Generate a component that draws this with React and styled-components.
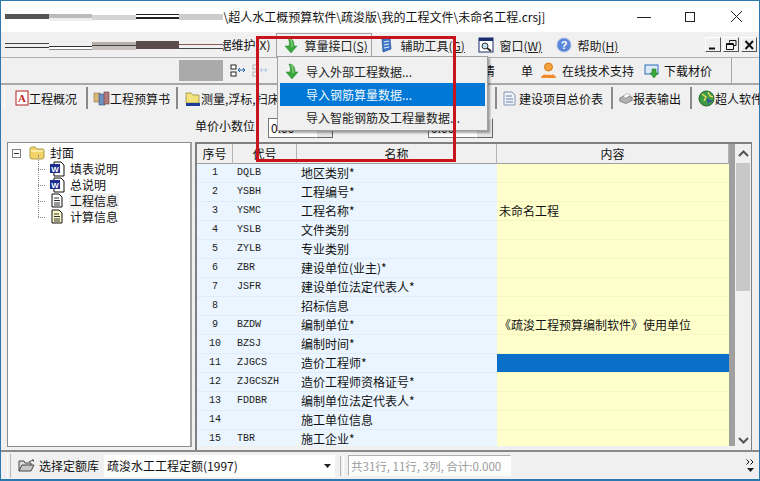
import styled, { createGlobalStyle } from 'styled-components';

const FONT = '"Noto Sans CJK SC", "Liberation Sans", sans-serif';

const rows = [
  [1, 'DQLB', '地区类别*', ''],
  [2, 'YSBH', '工程编号*', ''],
  [3, 'YSMC', '工程名称*', '未命名工程'],
  [4, 'YSLB', '文件类别', ''],
  [5, 'ZYLB', '专业类别', ''],
  [6, 'ZBR', '建设单位(业主)*', ''],
  [7, 'JSFR', '建设单位法定代表人*', ''],
  [8, '', '招标信息', ''],
  [9, 'BZDW', '编制单位*', '《疏浚工程预算编制软件》使用单位'],
  [10, 'BZSJ', '编制时间*', ''],
  [11, 'ZJGCS', '造价工程师*', ''],
  [12, 'ZJGCSZH', '造价工程师资格证号*', ''],
  [13, 'FDDBR', '编制单位法定代表人*', ''],
  [14, '', '施工单位信息', ''],
  [15, 'TBR', '施工企业*', ''],
];

const titleSmudges = [
  'linear-gradient(#fff 0 2px, #555 2px 7px, #fff 7px)',
  'linear-gradient(#fff 0 2px, #bbb 2px 6px, #eee 6px 9px, #fff 9px)',
  'linear-gradient(#fff 0 3px, #d4d4d4 3px 8px, #fff 8px)',
  'linear-gradient(#fff 0 2px, #222 2px 3px, #fff 3px 5px, #222 5px 7px, #fff 7px)',
  'linear-gradient(#fff 0 2px, #ccc 2px 8px, #fff 8px)',
];

const menuSmudges = [
  'linear-gradient(#f0f0f0 0 5px, #444 5px 6px, #f0f0f0 6px 9px, #333 9px 10px, #f0f0f0 10px)',
  'linear-gradient(#f0f0f0 0 8px, #333 8px 9px, #fff 9px 11px, #888 11px 12px, #f0f0f0 12px)',
  'linear-gradient(#f0f0f0 0 4px, #b8aeaa 4px 7px, #444 7px 8px, #c8c0bc 8px 12px, #f0f0f0 12px)',
  'linear-gradient(#f0f0f0 0 3px, #5a4c4a 3px 11px, #f0f0f0 11px)',
  'linear-gradient(#f0f0f0 0 6px, #8a5a55 6px 7px, #f0f0f0 7px 10px, #444 10px 11px, #f0f0f0 11px)',
];

const GlobalStyle = createGlobalStyle`
  html, body { margin: 0; padding: 0; background: #f0f0f0; }
  body { font-family: ${FONT}; font-size: 12px; color: #111; }
`;

const Win = styled.div`
  position: relative;
  width: 760px;
  height: 481px;
  overflow: hidden;
  box-sizing: border-box;
  border-left: 1px solid #2a7ab0;
  border-right: 1px solid #2a7ab0;
  border-top: 1px solid #2a7ab0;
  border-bottom: 2px solid #2a7ab0;
  display: flex;
  flex-direction: column;
  background: #f0f0f0;
`;

const TitleBar = styled.div`
  height: 31px;
  flex: none;
  background: #fff;
  display: flex;
  align-items: center;
  padding-left: 4px;
`;

const Smudge = styled.div`
  width: 43.5px;
  height: ${(p) => p.$h}px;
  background: ${(p) => p.$bg};
  flex: none;
`;

const TitleText = styled.div`
  margin-left: 1px;
  font-size: 12px;
  white-space: nowrap;
  flex: 1;
`;

const WinButton = styled.div`
  width: 46px;
  display: flex;
  justify-content: center;
  align-items: center;
  flex: none;
`;

const MenuBar = styled.div`
  height: 25px;
  flex: none;
  display: flex;
  align-items: center;
  padding-left: 4px;
  white-space: nowrap;
`;

const MenuClip = styled.span`
  width: 53px;
  overflow: hidden;
  flex: none;
  text-indent: -3px;
`;

const MenuItem = styled.div`
  height: 24px;
  width: ${(p) => p.$w}px;
  flex: none;
  box-sizing: border-box;
  display: flex;
  align-items: center;
  gap: ${(p) => p.$gap || 6}px;
  padding-left: ${(p) => p.$pad}px;
  border: 1px solid ${(p) => (p.$open ? '#a0a0a0' : 'transparent')};
  border-bottom: none;
  color: #222;
  svg { flex: none; }
`;

const Underlined = styled.span`
  text-decoration: underline;
  text-underline-offset: 1px;
`;

const MdiGroup = styled.div`
  display: flex;
  gap: 2px;
  margin-left: auto;
  margin-right: 2px;
`;

const MdiButton = styled.div`
  width: 16px;
  height: 15px;
  border: 1px solid;
  border-color: #fff #555 #555 #fff;
  box-sizing: border-box;
  display: flex;
  align-items: center;
  justify-content: center;
`;

const ToolBar = styled.div`
  height: 28px;
  flex: none;
  box-sizing: border-box;
  border-top: 1px solid #b0b0b0;
  border-bottom: 2px solid #a8a8a8;
  display: flex;
  align-items: center;
  padding-left: 178px;
  white-space: nowrap;
`;

const GrayBlock = styled.div`
  width: 44px;
  height: 21px;
  background: #aaa;
  flex: none;
  margin-right: 7px;
`;

const ToolIcon = styled.div`
  width: ${(p) => p.$w || 17}px;
  flex: none;
  display: flex;
  align-items: center;
`;

const ListLabel = styled.div`
  margin-left: 214px;
  width: 50px;
  flex: none;
  display: flex;
  justify-content: space-between;
`;

const ToolAction = styled.div`
  display: flex;
  align-items: center;
  gap: ${(p) => p.$gap}px;
  margin-left: ${(p) => p.$ml}px;
  flex: none;
`;

const ToolEnd = styled.div`
  width: 1px;
  height: 25px;
  background: #a8a8a8;
  margin-left: 19px;
  flex: none;
`;

const TabBar = styled.div`
  height: 26px;
  flex: none;
  display: flex;
  align-items: flex-start;
  padding: 2px 0 0 3px;
  box-sizing: border-box;
  white-space: nowrap;
  overflow: hidden;
`;

const TabItem = styled.div`
  height: 22px;
  flex: none;
  width: ${(p) => p.$w}px;
  box-sizing: border-box;
  display: flex;
  align-items: center;
  padding-left: ${(p) => p.$pad}px;
  gap: ${(p) => p.$gap || 0}px;
  border-left: ${(p) => (p.$first ? '1px solid #fff' : 'none')};
  border-right: 2px solid ${(p) => (p.$last ? 'transparent' : '#8a8a8a')};
  font-size: 12px;
  svg { flex: none; }
`;

const Options = styled.div`
  height: 31px;
  flex: none;
  box-sizing: border-box;
  display: flex;
  align-items: center;
  padding: 2px 0 0 194px;
`;

const OptLabel = styled.div`
  width: 73px;
  flex: none;
  padding-bottom: 5px;
`;

const Spin = styled.div`
  width: 65px;
  height: 20px;
  flex: none;
  display: flex;
  margin-left: ${(p) => p.$ml || 0}px;
`;

const SpinField = styled.div`
  flex: 1;
  background: #fff;
  border: 1px solid #777;
  border-right: none;
  font-size: 12px;
  line-height: 18px;
  padding-left: 2px;
`;

const SpinButton = styled.div`
  width: 17px;
  box-sizing: border-box;
  border: 1px solid;
  border-color: #fff #666 #666 #fff;
  background: #e6e6e6;
`;

const Body = styled.div`
  height: 310px;
  flex: none;
  display: flex;
  padding-left: 6px;
  padding-right: 6px;
  gap: 3px;
  box-sizing: border-box;
  border-bottom: 2px solid #8a8a8a;
`;

const TreePanel = styled.div`
  width: 185px;
  height: 305px;
  flex: none;
  box-sizing: border-box;
  background: #fff;
  border: 1px solid #8c8c8c;
  border-right: 2px solid #a0a0a0;
  padding: 2px 0 0 4px;
`;

const TreeRow = styled.div`
  height: 16px;
  display: flex;
  align-items: center;
  gap: ${(p) => p.$gap || 4}px;
  font-size: 12px;
  line-height: 16px;
`;

const Expander = styled.div`
  width: 9px;
  height: 9px;
  box-sizing: border-box;
  border: 1px solid #808080;
  position: relative;
  flex: none;
  margin-right: 3px;
  &::after {
    content: '';
    position: absolute;
    left: 1px;
    top: 3px;
    width: 5px;
    height: 1px;
    background: #333;
  }
`;

const TreeChildren = styled.div`
  margin-left: 26px;
  position: relative;
  &::before {
    content: '';
    position: absolute;
    left: 0;
    top: -6px;
    bottom: 8px;
    border-left: 1px dotted #888;
  }
`;

const Connector = styled.div`
  width: 7px;
  border-top: 1px dotted #888;
  flex: none;
`;

const TreeLabel = styled.span`
  background: ${(p) => (p.$sel ? '#f0f0f0' : 'transparent')};
  padding: 0 1px;
`;

const GridPanel = styled.div`
  width: 557px;
  height: 308px;
  flex: none;
  box-sizing: border-box;
  border: 1px solid #808080;
  border-left-width: 2px;
  border-top-width: 2px;
  border-bottom: none;
  display: flex;
  background: #f0f0f0;
`;

const GridScroll = styled.div`
  width: 538px;
  flex: none;
  overflow: hidden;
  margin-bottom: 4px;
  background: #a0a0a0;
`;

const Row = styled.div`
  display: grid;
  grid-template-columns: 36px 64px 200px 232px;
  height: ${(p) => p.$h || 19}px;
`;

const HeadCell = styled.div`
  background: #f0f0f0;
  border-right: 1px solid #b4b4b4;
  border-bottom: 1px solid #a0a0a0;
  text-align: center;
  line-height: 19px;
  font-size: 12px;
`;

const Cell = styled.div`
  background: ${(p) => p.$bg};
  border-bottom: 1px solid ${(p) => (p.$yellow ? '#f6f6c4' : '#e0edf8')};
  font-size: 12px;
  line-height: 18px;
  padding-left: ${(p) => p.$pad || 0}px;
  text-align: ${(p) => (p.$center ? 'center' : 'left')};
  white-space: nowrap;
  overflow: hidden;
`;

const CodeCell = styled(Cell)`
  font-family: "Liberation Mono", monospace;
  font-size: 10px;
  color: #222;
`;

const ScrollBar = styled.div`
  flex: 1;
  display: flex;
  flex-direction: column;
  align-items: stretch;
  padding: 0 1px 0 1px;
`;

const ScrollArrow = styled.div`
  height: 19px;
  flex: none;
  display: flex;
  align-items: center;
  justify-content: center;
`;

const ScrollThumb = styled.div`
  height: 128px;
  flex: none;
  background: #c8c8c8;
`;

const ScrollRest = styled.div`
  flex: 1;
`;

const StatusBar = styled.div`
  flex: 1;
  display: flex;
  align-items: center;
  padding-left: 6px;
  white-space: nowrap;
`;

const Grip = styled.div`
  width: 2px;
  height: 24px;
  border-left: 1px solid #fff;
  border-right: 1px solid #b8b8b8;
  flex: none;
  margin-right: 7px;
`;

const StatusLabel = styled.span`
  margin-left: 4px;
  flex: none;
`;

const Combo = styled.div`
  width: 231px;
  height: 22px;
  flex: none;
  margin-left: 5px;
  background: #fff;
  display: flex;
  align-items: center;
  padding: 0 4px 0 3px;
  box-sizing: border-box;
  justify-content: space-between;
  font-size: 12px;
`;

const StatusDivider = styled.div`
  width: 2px;
  height: 20px;
  border-left: 1px solid #b8b8b8;
  border-right: 1px solid #fff;
  margin: 0 4px 0 5px;
  flex: none;
`;

const StatusField = styled.div`
  width: 163px;
  height: 21px;
  box-sizing: border-box;
  border: 1px solid;
  border-color: #b0b0b0 #fff #fff #b0b0b0;
  color: #9a9a9a;
  font-size: 11.5px;
  line-height: 20px;
  padding-left: 2px;
  background: #fff;
  flex: none;
`;

const More = styled.div`
  margin-left: auto;
  margin-right: 5px;
  display: flex;
  flex-direction: column;
  align-items: center;
  gap: 3px;
  flex: none;
`;

const DropMenu = styled.div`
  position: absolute;
  left: 276px;
  top: 55px;
  width: 211px;
  height: 75px;
  box-sizing: border-box;
  background: #f0f0f0;
  border: 1px solid #a0a0a0;
  box-shadow: 2px 2px 2px rgba(0, 0, 0, 0.35);
  padding: 2px;
`;

const DropItem = styled.div`
  height: ${(p) => p.$h || 23}px;
  display: flex;
  align-items: center;
  padding-left: ${(p) => (p.$icon ? 5 : 26)}px;
  gap: 7px;
  background: ${(p) => (p.$active ? '#0078d7' : 'transparent')};
  color: ${(p) => (p.$active ? '#f2f8fd' : '#222')};
  white-space: nowrap;
`;

const RedBox = styled.div`
  position: absolute;
  left: 255px;
  top: 35px;
  width: 200px;
  height: 126px;
  box-sizing: border-box;
  border: 3.5px solid #c8141c;
  pointer-events: none;
`;

const GreenArrow = () => (
  <svg width="14" height="17" viewBox="0 0 14 17">
    <path d="M5 1 C9 2 10 5 10 9 L13 9 L7 16 L1 9 L5 9 C6 6 5 3 4 1 Z" fill="#3ba83b" stroke="#1f7f2a" strokeWidth="0.5" />
    <path d="M6 2 C8 4 8 7 8 10" stroke="#a8e29a" strokeWidth="1" fill="none" />
  </svg>
);

const BlueBook = () => (
  <svg width="15" height="16" viewBox="0 0 15 16">
    <path d="M3 2 L11 1 L12 12 L4 15 Z" fill="#3f78c8" stroke="#1c4f96" strokeWidth="0.7" />
    <path d="M5 5 L10 4 M5 8 L10 7 M5 11 L10 10" stroke="#dfeaf8" strokeWidth="1.2" />
  </svg>
);

const WindowSearch = () => (
  <svg width="16" height="16" viewBox="0 0 16 16">
    <rect x="1" y="1" width="14" height="14" fill="#fff" stroke="#1c2c70" />
    <rect x="1" y="1" width="14" height="3" fill="#1c2c70" />
    <circle cx="7" cy="9" r="3" fill="#bfe0f0" stroke="#333" />
    <path d="M9 11 L13 14" stroke="#222" strokeWidth="1.6" />
  </svg>
);

const HelpIcon = () => (
  <svg width="16" height="16" viewBox="0 0 16 16">
    <circle cx="8" cy="8" r="7" fill="#5b86d8" stroke="#a8bfe8" />
    <text x="8" y="12" textAnchor="middle" fontSize="11" fontWeight="700" fill="#fff" fontFamily="Liberation Sans">?</text>
  </svg>
);

const MinLine = () => (
  <svg width="16" height="16" viewBox="0 0 16 16">
    <path d="M1 8.5 H15" stroke="#222" />
  </svg>
);

const MaxBox = () => (
  <svg width="12" height="12" viewBox="0 0 12 12">
    <rect x="1.5" y="1.5" width="9" height="9" fill="none" stroke="#222" />
  </svg>
);

const CloseX = () => (
  <svg width="13" height="13" viewBox="0 0 13 13">
    <path d="M1 1 L12 12 M12 1 L1 12" stroke="#222" />
  </svg>
);

const AlignIcon = ({ faint }) => (
  <svg width="16" height="14" viewBox="0 0 16 14" opacity={faint ? 0.3 : 1}>
    <rect x="1" y="1" width="5" height="4" fill="#fff" stroke="#222" />
    <rect x="1" y="8" width="5" height="4" fill="#fff" stroke="#222" />
    <path d="M8 6 H15 M10 4 L8 6 L10 8 M13 4 L15 6 L13 8" stroke="#1f5fa8" fill="none" />
  </svg>
);

const PersonIcon = () => (
  <svg width="17" height="18" viewBox="0 0 17 18">
    <circle cx="8.5" cy="5" r="4" fill="#f4a43a" stroke="#d97a1a" />
    <path d="M1 16 C2 10 15 10 16 16 Z" fill="#f08a2a" />
    <path d="M5 12 H12" stroke="#fff" strokeWidth="1.4" />
  </svg>
);

const DownloadIcon = () => (
  <svg width="16" height="16" viewBox="0 0 16 16">
    <rect x="1" y="2" width="13" height="9" fill="#dbe9f8" stroke="#2f6fb4" />
    <path d="M8 6 H12 V10 H14 L10 15 L6 10 H8 Z" fill="#3ca83c" stroke="#1f7f2a" strokeWidth="0.6" />
  </svg>
);

const AcrobatIcon = () => (
  <svg width="14" height="16" viewBox="0 0 14 16">
    <rect x="1" y="1" width="12" height="14" fill="#fff" stroke="#b02020" />
    <text x="7" y="12" textAnchor="middle" fontSize="11" fontWeight="700" fill="#c81e1e" fontFamily="Liberation Serif">A</text>
  </svg>
);

const BooksIcon = () => (
  <svg width="17" height="16" viewBox="0 0 17 16">
    <rect x="1" y="3" width="6" height="9" fill="#d8b878" stroke="#8a7040" strokeWidth="0.6" />
    <rect x="6" y="4" width="6" height="11" fill="#6f8fc0" stroke="#33527f" strokeWidth="0.6" />
    <rect x="11" y="2" width="5" height="12" fill="#b07878" stroke="#704444" strokeWidth="0.6" />
  </svg>
);

const FolderMapIcon = () => (
  <svg width="16" height="17" viewBox="0 0 16 17">
    <path d="M1 3 H6 L8 5 H14 V13 H1 Z" fill="#f4e27a" stroke="#8a8030" strokeWidth="0.7" />
    <rect x="1" y="13" width="14" height="3" fill="#1c3c9c" />
  </svg>
);

const SheetIcon = () => (
  <svg width="13" height="15" viewBox="0 0 13 15">
    <path d="M1 1 H9 L12 4 V14 H1 Z" fill="#eef3fa" stroke="#8296b4" />
    <path d="M3 5 H9 M3 8 H10 M3 11 H10" stroke="#6a80a4" />
  </svg>
);

const PrinterIcon = () => (
  <svg width="14" height="13" viewBox="0 0 18 15">
    <path d="M1 7 L8 3 L17 6 L17 10 L9 14 L1 11 Z" fill="#b0b0b0" stroke="#555" strokeWidth="0.7" />
    <path d="M5 5 L10 1 L15 3 L9 7 Z" fill="#fff" stroke="#777" strokeWidth="0.6" />
  </svg>
);

const GlobeIcon = () => (
  <svg width="17" height="17" viewBox="0 0 17 17">
    <circle cx="8.5" cy="8.5" r="7.5" fill="#3e9c45" stroke="#1f5f2a" />
    <path d="M4 4 L8 7 L6 11 M10 2 L12 6 L15 7" stroke="#e8d860" strokeWidth="1.4" fill="none" />
    <path d="M9 8 L15 12 L11 12 L10 15 Z" fill="#3c4ca8" />
  </svg>
);

const FolderIcon = () => (
  <svg width="16" height="14" viewBox="0 0 16 14">
    <path d="M1 3 Q1 1 3 1 H6 L8 3 H14 Q15 3 15 5 V11 Q15 13 13 13 H3 Q1 13 1 11 Z" fill="#f3d468" stroke="#b09a48" />
    <path d="M2 5 H14" stroke="#fff3b8" strokeWidth="1.5" />
  </svg>
);

const WordIcon = () => (
  <svg width="16" height="16" viewBox="0 0 16 16">
    <path d="M5 1 H12 L15 4 V15 H5 Z" fill="#fff" stroke="#111" />
    <rect x="1" y="3" width="10" height="9" fill="#1c2c90" />
    <text x="6" y="11" textAnchor="middle" fontSize="8" fontWeight="700" fill="#fff" fontFamily="Liberation Sans">W</text>
  </svg>
);

const DocIcon = ({ tint }) => (
  <svg width="16" height="16" viewBox="0 0 16 16">
    <path d="M3 1 H10 L13 4 V14 H3 Z" fill={tint || '#fff'} stroke="#111" />
    <path d="M5 5 H10 M5 7.5 H11 M5 10 H11 M5 12 H11" stroke="#333" />
  </svg>
);

const OpenFolderIcon = () => (
  <svg width="17" height="13" viewBox="0 0 17 13">
    <path d="M1 12 V2 H6 L7 4 H13 V6" fill="#ddd" stroke="#444" />
    <path d="M1 12 L4 6 H16 L13 12 Z" fill="#c8c8c8" stroke="#444" />
    <path d="M11 3 L15 1 M14 1 H15.5 V2.5" stroke="#444" fill="none" />
  </svg>
);

const TriDown = () => (
  <svg width="7" height="4" viewBox="0 0 7 4">
    <path d="M0 0 H7 L3.5 4 Z" fill="#222" />
  </svg>
);

const DoubleChevron = () => (
  <svg width="8" height="6" viewBox="0 0 8 6">
    <path d="M0.5 0.5 L3 3 L0.5 5.5 M4.5 0.5 L7 3 L4.5 5.5" stroke="#111" fill="none" />
  </svg>
);

const Chevron = ({ up }) => (
  <svg width="11" height="7" viewBox="0 0 11 7">
    <path d={up ? 'M1 6 L5.5 1.5 L10 6' : 'M1 1 L5.5 5.5 L10 1'} stroke="#555" strokeWidth="2" fill="none" />
  </svg>
);

const MdiGlyph = ({ kind }) => (
  <svg width="11" height="10" viewBox="0 0 11 10">
    {kind === 'min' && <path d="M1 8.5 H7" stroke="#111" strokeWidth="2" />}
    {kind === 'restore' && <path d="M3.5 2.5 V0.5 H10 V5.5 H7.5 M0.5 3.5 H7.5 V9.5 H0.5 Z M0.5 4.5 H7.5" stroke="#111" fill="none" />}
    {kind === 'close' && <path d="M1.5 1 L9 9 M9 1 L1.5 9" stroke="#111" strokeWidth="2" />}
  </svg>
);

export default function App() {
  return (
    <>
      <GlobalStyle />
      <Win>
        <TitleBar>
          {titleSmudges.map((bg) => (
            <Smudge key={bg} $bg={bg} $h={10} />
          ))}
          <TitleText>\超人水工概预算软件\疏浚版\我的工程文件\未命名工程.crsj]</TitleText>
          <WinButton><MinLine /></WinButton>
          <WinButton><MaxBox /></WinButton>
          <WinButton><CloseX /></WinButton>
        </TitleBar>

        <MenuBar>
          {menuSmudges.map((bg) => (
            <Smudge key={bg} $bg={bg} $h={14} />
          ))}
          <MenuClip>据维护(X)</MenuClip>
          <MenuItem $open $w={96} $pad={7} $gap={7}>
            <GreenArrow />
            <span>算量接口<Underlined>(S)</Underlined></span>
          </MenuItem>
          <MenuItem $w={100} $pad={6} $gap={7}>
            <BlueBook />
            <span>辅助工具<Underlined>(G)</Underlined></span>
          </MenuItem>
          <MenuItem $w={80} $pad={5}>
            <WindowSearch />
            <span>窗口<Underlined>(W)</Underlined></span>
          </MenuItem>
          <MenuItem $w={80} $pad={3}>
            <HelpIcon />
            <span>帮助<Underlined>(H)</Underlined></span>
          </MenuItem>
          <MdiGroup>
            <MdiButton><MdiGlyph kind="min" /></MdiButton>
            <MdiButton><MdiGlyph kind="restore" /></MdiButton>
            <MdiButton><MdiGlyph kind="close" /></MdiButton>
          </MdiGroup>
        </MenuBar>

        <ToolBar>
          <GrayBlock />
          <ToolIcon $w={22}><AlignIcon /></ToolIcon>
          <ToolIcon $w={17}><AlignIcon faint /></ToolIcon>
          <ListLabel><span>清</span><span>单</span></ListLabel>
          <ToolAction $ml={7} $gap={5}>
            <PersonIcon />
            <span>在线技术支持</span>
          </ToolAction>
          <ToolAction $ml={10} $gap={4}>
            <DownloadIcon />
            <span>下载材价</span>
          </ToolAction>
          <ToolEnd />
        </ToolBar>

        <TabBar>
          <TabItem $first $w={84} $pad={10}><AcrobatIcon />工程概况</TabItem>
          <TabItem $w={90} $pad={5}><BooksIcon />工程预算书</TabItem>
          <TabItem $w={319} $pad={7}><FolderMapIcon />测量,浮标,扫床工程</TabItem>
          <TabItem $w={116} $pad={6} $gap={3}><SheetIcon />建设项目总价表</TabItem>
          <TabItem $w={79} $pad={6}><PrinterIcon />报表输出</TabItem>
          <TabItem $last $w={72} $pad={6}><GlobeIcon />超人软件</TabItem>
        </TabBar>

        <Options>
          <OptLabel>单价小数位</OptLabel>
          <Spin><SpinField>0.00</SpinField><SpinButton /></Spin>
          <Spin $ml={95}><SpinField>0.00</SpinField><SpinButton /></Spin>
        </Options>

        <Body>
          <TreePanel>
            <TreeRow $gap={5}>
              <Expander />
              <FolderIcon />
              <span>封面</span>
            </TreeRow>
            <TreeChildren>
              <TreeRow><Connector /><WordIcon /><TreeLabel>填表说明</TreeLabel></TreeRow>
              <TreeRow><Connector /><WordIcon /><TreeLabel>总说明</TreeLabel></TreeRow>
              <TreeRow><Connector /><DocIcon /><TreeLabel $sel>工程信息</TreeLabel></TreeRow>
              <TreeRow><Connector /><DocIcon tint="#fdf8c8" /><TreeLabel>计算信息</TreeLabel></TreeRow>
            </TreeChildren>
          </TreePanel>

          <GridPanel>
            <GridScroll>
              <Row $h={20}>
                <HeadCell>序号</HeadCell>
                <HeadCell>代号</HeadCell>
                <HeadCell>名称</HeadCell>
                <HeadCell>内容</HeadCell>
              </Row>
              {rows.map(([no, code, name, content]) => (
                <Row key={no}>
                  <CodeCell $bg="#eaf5ff" $center>{no}</CodeCell>
                  <CodeCell $bg="#eaf5ff" $pad={4}>{code}</CodeCell>
                  <Cell $bg="#eaf5ff" $pad={4}>{name}</Cell>
                  <Cell $yellow $bg={no === 11 ? '#0a6fc8' : '#ffffcc'} $pad={2}>{content}</Cell>
                </Row>
              ))}
            </GridScroll>
            <ScrollBar>
              <ScrollArrow><Chevron up /></ScrollArrow>
              <ScrollThumb />
              <ScrollRest />
              <ScrollArrow><Chevron /></ScrollArrow>
            </ScrollBar>
          </GridPanel>
        </Body>

        <StatusBar>
          <Grip />
          <OpenFolderIcon />
          <StatusLabel>选择定额库</StatusLabel>
          <Combo>
            <span>疏浚水工工程定额(1997)</span>
            <TriDown />
          </Combo>
          <StatusDivider />
          <StatusField>共31行, 11行, 3列, 合计:0.000</StatusField>
          <More><DoubleChevron /><TriDown /></More>
        </StatusBar>

        <DropMenu>
          <DropItem $icon $h={24}>
            <GreenArrow />
            <span>导入外部工程数据...</span>
          </DropItem>
          <DropItem $active>导入钢筋算量数据...</DropItem>
          <DropItem>导入智能钢筋及工程量数据...</DropItem>
        </DropMenu>
        <RedBox />
      </Win>
    </>
  );
}
